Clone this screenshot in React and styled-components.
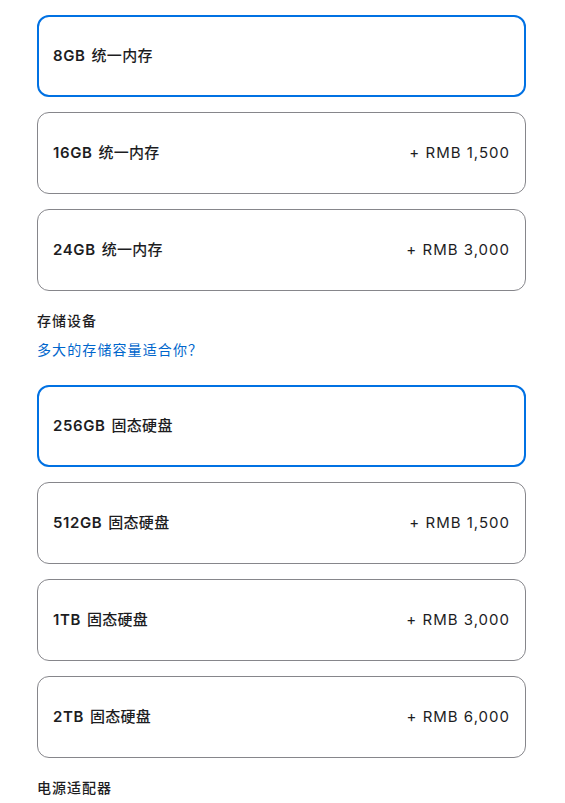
import React from "react";
import styled, { createGlobalStyle, css } from "styled-components";

const Global = createGlobalStyle`
  body {
    margin: 0;
    background: #fff;
    font-family: Inter, "Noto Sans CJK SC", sans-serif;
    color: #1d1d1f;
  }
`;

const Page = styled.div`
  width: 489px;
  margin: 15px 0 0 37px;
  display: flex;
  flex-direction: column;
`;

const Group = styled.div`
  display: flex;
  flex-direction: column;
  gap: 15px;
`;

const Selected = css`
  border: 2px solid #0071e3;
  padding: 0 14px;
`;

const Option = styled.div`
  box-sizing: border-box;
  height: 82px;
  display: flex;
  align-items: center;
  justify-content: space-between;
  border: 1px solid #86868b;
  border-radius: 12px;
  padding: 0 15px;
  ${(p) => p.$selected && Selected};
`;

const Name = styled.span`
  display: flex;
  align-items: center;
  gap: 6px;
  line-height: 20px;
`;

const Size = styled.span`
  font-size: 15px;
  font-weight: 600;
  letter-spacing: 0.6px;
`;

const Label = styled.span`
  font-size: 15px;
  font-weight: 500;
  letter-spacing: 0.3px;
`;

const Price = styled.span`
  font-size: 15px;
  line-height: 20px;
  letter-spacing: 1px;
  color: #1d1d1f;
`;

const Title = styled.div`
  font-size: 14px;
  font-weight: 500;
  letter-spacing: 1px;
  margin-top: ${(p) => p.$top}px;
  line-height: 20px;
`;

const Link = styled.a`
  font-size: 14px;
  letter-spacing: 1.1px;
  color: #0066cc;
  line-height: 20px;
  margin: 9px 0 25px;
  text-decoration: none;
`;

const memory = [
  { size: "8GB", label: "统一内存", selected: true },
  { size: "16GB", label: "统一内存", price: "+ RMB 1,500" },
  { size: "24GB", label: "统一内存", price: "+ RMB 3,000" },
];

const storage = [
  { size: "256GB", label: "固态硬盘", selected: true },
  { size: "512GB", label: "固态硬盘", price: "+ RMB 1,500" },
  { size: "1TB", label: "固态硬盘", price: "+ RMB 3,000" },
  { size: "2TB", label: "固态硬盘", price: "+ RMB 6,000" },
];

const OptionList = ({ items }) => (
  <Group>
    {items.map((o) => (
      <Option key={o.size} $selected={o.selected}>
        <Name>
          <Size>{o.size}</Size>
          <Label>{o.label}</Label>
        </Name>
        {o.price && <Price>{o.price}</Price>}
      </Option>
    ))}
  </Group>
);

export default function App() {
  return (
    <>
      <Global />
      <Page>
        <OptionList items={memory} />
        <Title $top={20}>存储设备</Title>
        <Link href="#">多大的存储容量适合你？</Link>
        <OptionList items={storage} />
        <Title $top={20}>电源适配器</Title>
      </Page>
    </>
  );
}
